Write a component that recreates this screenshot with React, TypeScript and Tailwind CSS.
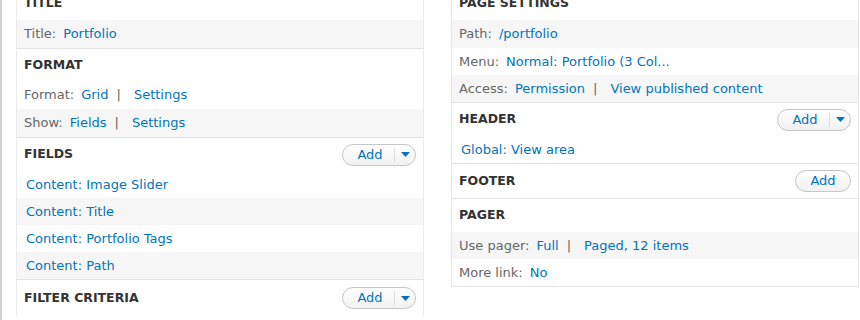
import React from "react";

type Row = { label?: string; links: string[]; gray?: boolean; h?: number };
type Section = { title: string; rows: Row[]; add?: "drop" | "plain"; h?: number; first?: boolean };

function AddButton({ drop }: { drop: boolean }) {
  return (
    <div
      className={`flex h-[22px] items-center rounded-full border border-[#c6c6c6] bg-gradient-to-b from-white to-[#f1f1f1] text-[13px] font-normal normal-case text-[#0074bd] ${
        drop ? "w-[74px]" : "w-[56px] justify-center"
      }`}
    >
      {drop ? (
        <>
          <span className="flex-1 pl-[3px] text-center">Add</span>
          <span className="h-[14px] w-px bg-[#dcdcdc]" />
          <span className="flex w-[20px] justify-center">
            <svg width="9" height="5" viewBox="0 0 9 5">
              <path d="M0 0h9L4.5 5z" fill="#0074bd" />
            </svg>
          </span>
        </>
      ) : (
        <span>Add</span>
      )}
    </div>
  );
}

function Block({ s }: { s: Section }) {
  return (
    <div className={s.first ? "" : "border-t border-[#e4e4e4]"}>
      <div
        className="flex items-center justify-between px-[7px] text-[12.5px] font-bold uppercase text-[#333]"
        style={{ height: s.h ?? 32 }}
      >
        <span>{s.title}</span>
        {s.add && <AddButton drop={s.add === "drop"} />}
      </div>
      {s.rows.map((r, i) => (
        <div
          key={i}
          className={`flex items-center text-[13px] ${r.gray ? "bg-[#f6f6f6]" : "bg-white"} ${
            r.label ? "px-[7px]" : "px-[9px]"
          }`}
          style={{ height: r.h ?? 27 }}
        >
          {r.label && <span className="mr-[7px] text-[#666]">{r.label}</span>}
          {r.links.map((l, j) => (
            <React.Fragment key={j}>
              {j > 0 && <span className="ml-[8px] mr-[13px] text-[#666]">|</span>}
              <span className="text-[#0074bd]">{l}</span>
            </React.Fragment>
          ))}
        </div>
      ))}
    </div>
  );
}

const left: Section[] = [
  { title: "Title", first: true, h: 33, rows: [{ label: "Title:", links: ["Portfolio"], gray: true, h: 28 }] },
  {
    title: "Format",
    rows: [
      { label: "Format:", links: ["Grid", "Settings"], h: 28 },
      { label: "Show:", links: ["Fields", "Settings"], gray: true, h: 28 },
    ],
  },
  {
    title: "Fields",
    add: "drop",
    h: 33,
    rows: [
      { links: ["Content: Image Slider"] },
      { links: ["Content: Title"], gray: true },
      { links: ["Content: Portfolio Tags"] },
      { links: ["Content: Path"], gray: true },
    ],
  },
  { title: "Filter criteria", add: "drop", h: 36, rows: [] },
];

const right: Section[] = [
  {
    title: "Page settings",
    first: true,
    h: 33,
    rows: [
      { label: "Path:", links: ["/portfolio"], gray: true, h: 28 },
      { label: "Menu:", links: ["Normal: Portfolio (3 Col..."] },
      { label: "Access:", links: ["Permission", "View published content"], gray: true },
    ],
  },
  { title: "Header", add: "drop", h: 33, rows: [{ links: ["Global: View area"], h: 27 }] },
  { title: "Footer", add: "plain", h: 34, rows: [] },
  {
    title: "Pager",
    h: 33,
    rows: [
      { label: "Use pager:", links: ["Full", "Paged, 12 items"], gray: true },
      { label: "More link:", links: ["No"] },
    ],
  },
];

export default function App() {
  return (
    <div
      className="h-[320px] w-[860px] overflow-hidden border-l-2 border-[#d4d4d4] bg-white"
      style={{ fontFamily: '"DejaVu Sans", "Liberation Sans", sans-serif' }}
    >
      <div className="-mt-[13px] flex items-start gap-[27px] pl-[14px]">
        <div className="w-[408px] border-x border-[#ececec]">
          {left.map((s) => (
            <Block key={s.title} s={s} />
          ))}
        </div>
        <div className="w-[408px] border border-t-0 border-[#e6e6e6]">
          {right.map((s) => (
            <Block key={s.title} s={s} />
          ))}
        </div>
      </div>
    </div>
  );
}
